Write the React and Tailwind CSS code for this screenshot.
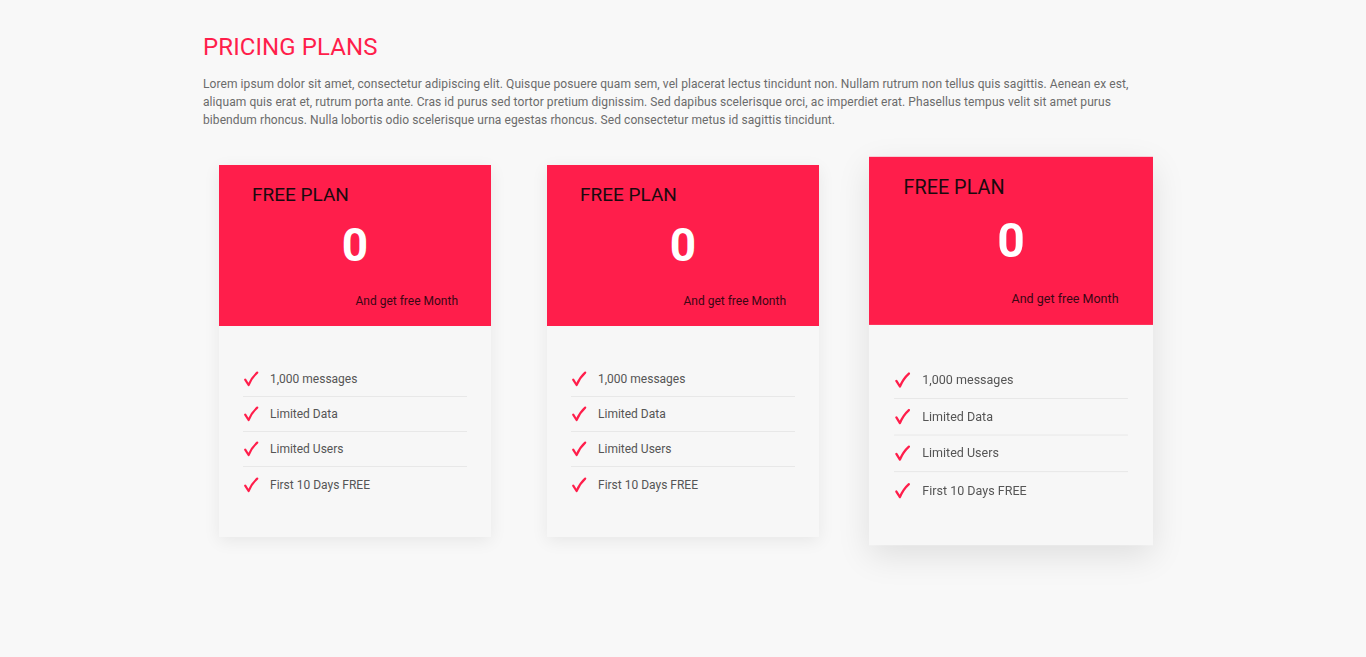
import React from "react";

const Check = () => (
  <svg width="16" height="16" viewBox="0 0 16 16" className="shrink-0">
    <path d="M2.2 8.6 L5.6 14 C7.6 9.2 10.4 5 14.2 1.6" fill="none" stroke="#ff1e4b" strokeWidth="2.2" strokeLinecap="round" strokeLinejoin="round" />
  </svg>
);

const features = ["1,000 messages", "Limited Data", "Limited Users", "First 10 Days FREE"];

function Card({ raised }) {
  return (
    <div
      className={
        "w-[272px] bg-[#f7f7f7] " +
        (raised
          ? "scale-[1.044] shadow-[0_10px_30px_rgba(0,0,0,0.10)]"
          : "shadow-[0_4px_16px_rgba(0,0,0,0.07)]")
      }
    >
      <div className="h-[161px] bg-[#ff1e4b] pt-[18px] px-[33px] flex flex-col">
        <div className="text-[19px] leading-[23px] text-[#1a0a0e]">FREE PLAN</div>
        <div className="mt-[14px] text-center text-[46px] leading-[50px] font-bold text-white">0</div>
        <div className="mt-[23px] text-right text-[12px] leading-[16px] text-[#3a0614]">And get free Month</div>
      </div>
      <div className="pt-[36px] pb-[35px] px-[24px]">
        {features.map((f, i) => (
          <div
            key={f}
            className={
              "h-[35px] flex items-center gap-[11px] " +
              (i < features.length - 1 ? "border-b border-[#e8e8e8]" : "")
            }
          >
            <Check />
            <span className="text-[12px] text-[#555]">{f}</span>
          </div>
        ))}
      </div>
    </div>
  );
}

export default function App() {
  return (
    <div className="min-h-[657px] bg-[#f8f8f8]" style={{ fontFamily: "Roboto, 'Open Sans', sans-serif" }}>
      <div className="pl-[203px] pt-[33px]">
        <h1 className="text-[24px] leading-[28px] tracking-[0.1px] text-[#ff1e4b]">PRICING PLANS</h1>
        <p className="mt-[14px] text-[12px] leading-[18px] tracking-[0.08px] text-[#6b6b6b]">
          Lorem ipsum dolor sit amet, consectetur adipiscing elit. Quisque posuere quam sem, vel placerat lectus tincidunt non. Nullam rutrum non tellus quis sagittis. Aenean ex est,
          <br />
          aliquam quis erat et, rutrum porta ante. Cras id purus sed tortor pretium dignissim. Sed dapibus scelerisque orci, ac imperdiet erat. Phasellus tempus velit sit amet purus
          <br />
          bibendum rhoncus. Nulla lobortis odio scelerisque urna egestas rhoncus. Sed consectetur metus id sagittis tincidunt.
        </p>
      </div>
      <div className="pl-[219px] pt-[36px] flex gap-[56px] items-start">
        <Card />
        <Card />
        <Card raised />
      </div>
    </div>
  );
}
